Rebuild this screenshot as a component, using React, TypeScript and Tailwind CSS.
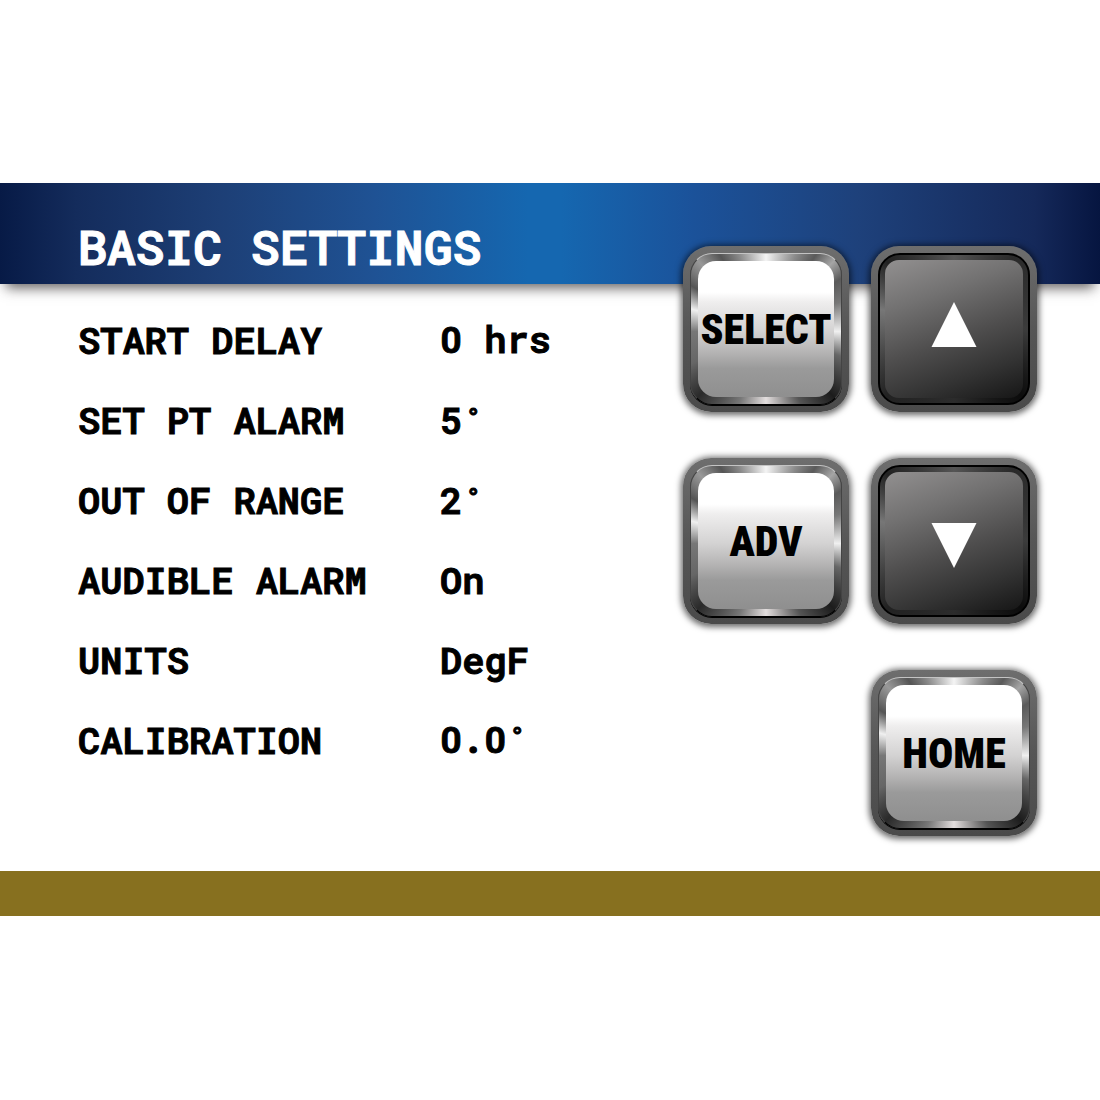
import clsx from 'clsx';

const settings = [
  { label: 'START DELAY', value: '0 hrs' },
  { label: 'SET PT ALARM', value: '5°' },
  { label: 'OUT OF RANGE', value: '2°' },
  { label: 'AUDIBLE ALARM', value: 'On' },
  { label: 'UNITS', value: 'DegF' },
  { label: 'CALIBRATION', value: '0.0°' },
];

const MONO = "font-['Roboto_Mono','DejaVu_Sans_Mono',monospace] font-semibold [-webkit-text-stroke:1px_currentColor]";
const METAL =
  'bg-[conic-gradient(from_0deg,#f4f4f4_0deg,#8a8a8a_22deg,#5a5a5a_34deg,#a5a5a5_45deg,#5a5a5a_56deg,#777_70deg,#f0f0f0_92deg,#666_110deg,#1c1c1c_135deg,#555_155deg,#e4dfdf_180deg,#777_200deg,#2a2a2a_225deg,#666_245deg,#777_268deg,#f0f0f0_285deg,#555_300deg,#999_315deg,#555_328deg,#8a8a8a_340deg,#f4f4f4_360deg)]';

// the panel draws a plain zero and a small raised degree ring
function Value({ text }: { text: string }) {
  return (
    <>
      {text.split('').map((ch, i) => {
        if (ch === '0') return <span key={i} className="inline-block w-[22px] text-center font-['Roboto',sans-serif]">0</span>;
        if (ch === '°') return <span key={i} className="inline-block w-[22px] text-center text-[28px] leading-none align-[6px]">°</span>;
        return <span key={i}>{ch}</span>;
      })}
    </>
  );
}

function PanelButton({ dark, label, className, children }: any) {
  return (
    <button
      type="button"
      aria-label={label}
      className={clsx(
        'size-[166px] p-[7px] rounded-[28px] bg-linear-to-b from-[#6e6e6e] via-[#565656] to-[#4a4a4a] shadow-[0_1px_6px_2px_rgba(0,0,0,0.6)]',
        className
      )}
    >
      {dark ? (
        <span className="block size-full p-[5px] rounded-[22px] border-2 border-black bg-[conic-gradient(from_0deg,#555_0deg,#2a2a2a_40deg,#3c3c3c_90deg,#0c0c0c_135deg,#2c2c2c_180deg,#222_225deg,#777_285deg,#222_315deg,#555_360deg)]">
          <span className="flex size-full items-center justify-center rounded-[14px] bg-[linear-gradient(160deg,#929090_0%,#727171_28%,#4f4e4e_55%,#333_78%,#161616_100%)]">
            {children}
          </span>
        </span>
      ) : (
        <span className={clsx('block size-full p-[7px] rounded-[22px] border border-t-[#c4c4c4] border-x-[#444] border-b-black shadow-[0_1px_0_#000]', METAL)}>
          <span className="flex size-full items-center justify-center rounded-[18px] bg-[linear-gradient(180deg,#fff_0%,#fff_23%,#efeeee_30%,#d3d2d2_52%,#b3b2b2_68%,#9a9a9a_79%,#8f8f8f_100%)] text-black">
            {children}
          </span>
        </span>
      )}
    </button>
  );
}

export default function App() {
  return (
    <div className="min-h-screen bg-white pt-[183px]">
      <header className="flex h-[101px] items-end pl-[78px] pb-[9px] bg-[linear-gradient(90deg,#071a46_0%,#142c5c_7%,#1d3f76_20%,#1f5294_34%,#1567b0_48%,#1567b0_51%,#1b529a_63%,#1e417b_78%,#15295a_94%,#061540_100%)] shadow-[0_10px_12px_-6px_rgba(50,45,45,0.75)]">
        <h1 className={clsx(MONO, 'text-[48px] leading-14 text-white')}>BASIC SETTINGS</h1>
      </header>

      <main className="flex items-start justify-between pl-[78px] pr-[63px] pb-[35px]">
        <table className={clsx(MONO, 'mt-4 text-left text-[37px] leading-10 text-black')}>
          <tbody>
            {settings.map((s) => (
              <tr key={s.label} className="h-20">
                <th scope="row" className="w-[362px] p-0 font-semibold whitespace-nowrap">{s.label}</th>
                <td className="p-0 whitespace-nowrap"><Value text={s.value} /></td>
              </tr>
            ))}
          </tbody>
        </table>

        <div className="relative -mt-[38px] grid shrink-0 grid-cols-2 gap-x-[22px] gap-y-[46px] font-['Roboto_Condensed','DejaVu_Sans_Condensed',sans-serif] text-[42px] font-black">
          <PanelButton>SELECT</PanelButton>
          <PanelButton dark label="Up">
            <svg width="46" height="54" viewBox="0 0 46 54" fill="#fff"><path d="M23 0 45.500 45H.5z" /></svg>
          </PanelButton>
          <PanelButton>ADV</PanelButton>
          <PanelButton dark label="Down">
            <svg width="46" height="54" viewBox="0 0 46 54" fill="#fff"><path d="M.5 9h45L23 54z" /></svg>
          </PanelButton>
          <PanelButton className="col-start-2">HOME</PanelButton>
        </div>
      </main>

      <footer className="h-[45px] bg-[#87701f]" />
    </div>
  );
}
